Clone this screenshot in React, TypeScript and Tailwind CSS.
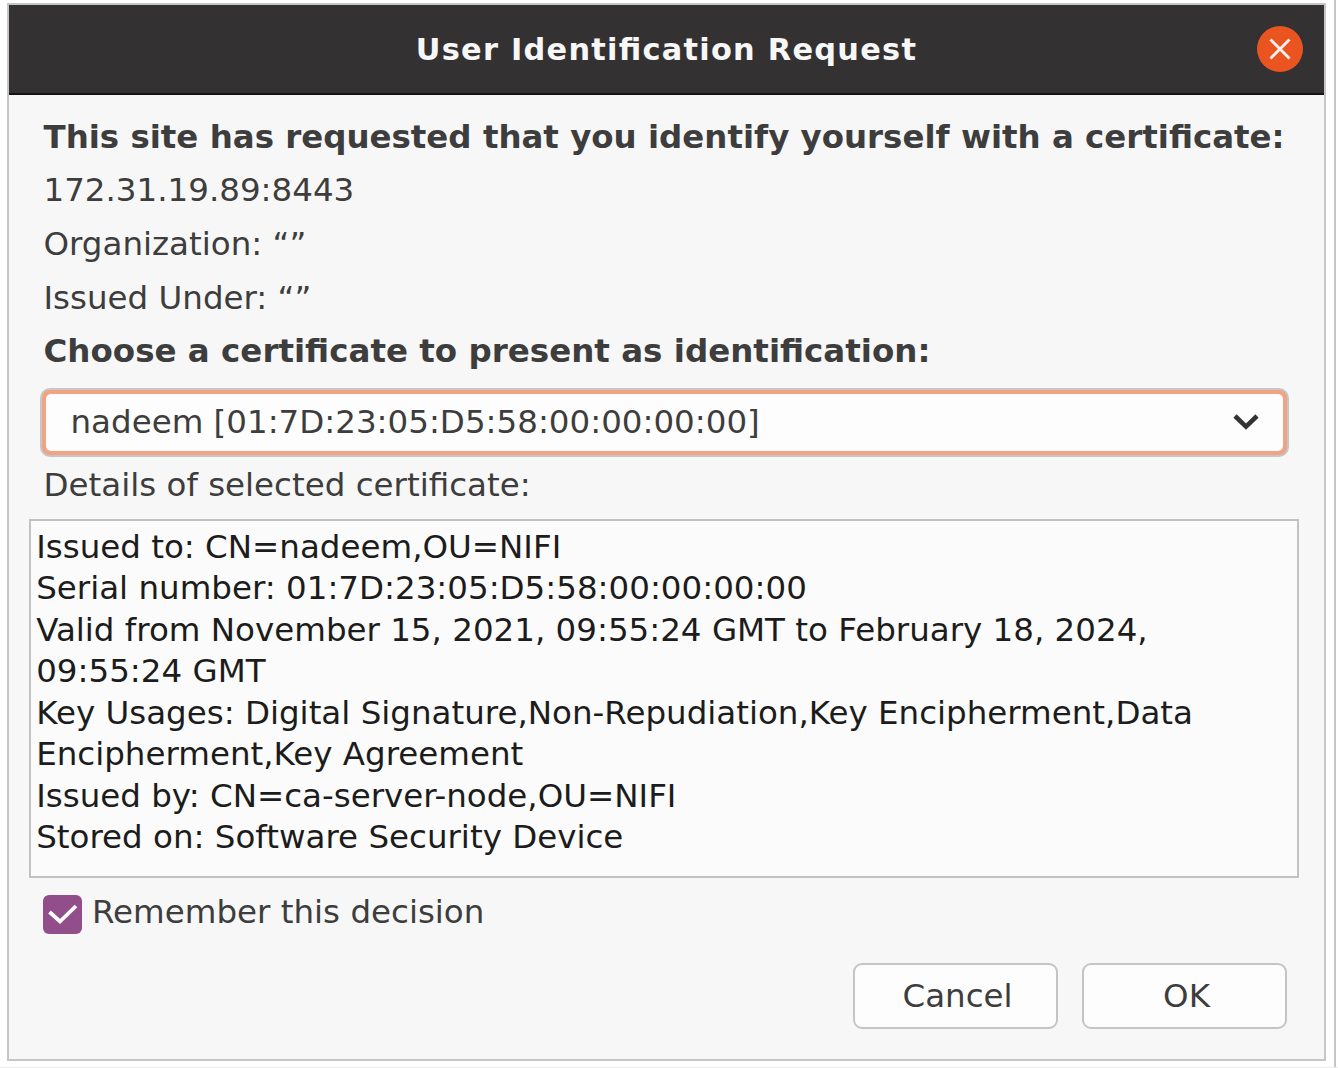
import { useState } from "react";

const details = [
  "Issued to: CN=nadeem,OU=NIFI",
  "Serial number: 01:7D:23:05:D5:58:00:00:00:00",
  "Valid from November 15, 2021, 09:55:24 GMT to February 18, 2024,",
  "09:55:24 GMT",
  "Key Usages: Digital Signature,Non-Repudiation,Key Encipherment,Data",
  "Encipherment,Key Agreement",
  "Issued by: CN=ca-server-node,OU=NIFI",
  "Stored on: Software Security Device",
];

function TitleBar() {
  return (
    <header className="relative flex h-[90px] shrink-0 items-center justify-center border-b-2 border-[#161415] bg-[#333132]">
      <h1 className="pt-[3px] text-[30.4px] leading-none font-bold tracking-[1.25px] whitespace-nowrap text-[#f7f7f7] [font-feature-settings:'liga'_1]">
        User Identification Request
      </h1>
      <button aria-label="Close" className="absolute top-[21px] right-[21px] size-[46px] rounded-full bg-[#e95420]">
        <svg viewBox="0 0 46 46" className="size-full" fill="none" stroke="#fdf3ef" strokeWidth="2.8">
          <path d="M13.5 13.5 32.5 32.5M32.5 13.5 13.5 32.5" />
        </svg>
      </button>
    </header>
  );
}

function CertificateSelect() {
  return (
    <button className="mt-[8.5px] ml-[31px] flex h-[69px] w-[1249px] items-center justify-between rounded-[10px] border-2 border-[#c3c7c7] bg-[#f4a284] p-1 text-left">
      <span className="flex h-full w-full items-center justify-between rounded-[5px] bg-[#fdfdfd] pr-[24px] pl-[24.5px]">
        <span className="pt-px whitespace-nowrap">nadeem [01:7D:23:05:D5:58:00:00:00:00]</span>
        <svg viewBox="0 0 26 18" className="h-[18px] w-[26px]" fill="none" stroke="#333333" strokeWidth="4.6">
          <path d="M2 3 13 13.6 24 3" />
        </svg>
      </span>
    </button>
  );
}

function DialogButton({ label }: { label: string }) {
  return (
    <button className="flex h-[66px] w-[205px] items-center justify-center rounded-[9px] border-2 border-[#c4c4c4] bg-[#fdfdfd] pt-[2.5px] pl-[4px]">
      {label}
    </button>
  );
}

export default function App() {
  const [remember, setRemember] = useState(true);
  return (
    <div className="flex h-[1068px] w-[1338px] overflow-hidden border-b border-[#ececec] bg-white pl-[7px] font-['DejaVu_Sans',sans-serif] text-[32.5px] leading-[41.5px] text-[#3d3d3d]">
      <section className="mt-[3px] flex h-[1058px] w-[1319px] shrink-0 flex-col border-2 border-[#c6c6c6] bg-[#f7f7f7]">
        <TitleBar />
        <div className="pt-[15.5px] pl-[34.5px] leading-[53.7px] whitespace-nowrap">
          <p className="text-[32.45px] font-bold">
            This site has requested that you identify yourself with a certificate:
          </p>
          <p>172.31.19.89:8443</p>
          <p>Organization: “”</p>
          <p>Issued Under: “”</p>
          <p className="font-bold">Choose a certificate to present as identification:</p>
        </div>
        <CertificateSelect />
        <p className="pl-[34.5px] leading-[56px]">Details of selected certificate:</p>
        <div className="mt-[6px] ml-[20px] h-[359px] w-[1270px] border-2 border-[#c2c2c2] bg-[#fbfbfb] pt-[6px] pl-[5.2px] whitespace-nowrap text-[#1c1c1c]">
          {details.map((line) => (
            <p key={line}>{line}</p>
          ))}
        </div>
        <label className="mt-[17px] ml-[34px] flex h-[39px] items-center">
          <input type="checkbox" className="sr-only" checked={remember} onChange={() => setRemember(!remember)} />
          <span className="size-[39px] rounded-[6px] bg-[#924d8b]">
            {remember && (
              <svg viewBox="0 0 39 39" className="size-full" fill="none" stroke="#ffffff" strokeWidth="3.8">
                <path d="M6.5 17 17 26.5 33 11" />
              </svg>
            )}
          </span>
          <span className="-mt-[2px] ml-[10px]">Remember this decision</span>
        </label>
        <div className="mt-[29px] mr-[37px] flex justify-end gap-[24px]">
          <DialogButton label="Cancel" />
          <DialogButton label="OK" />
        </div>
      </section>
      <div className="ml-[8px] h-full w-[2px] bg-[#c6c6c6]" />
    </div>
  );
}
